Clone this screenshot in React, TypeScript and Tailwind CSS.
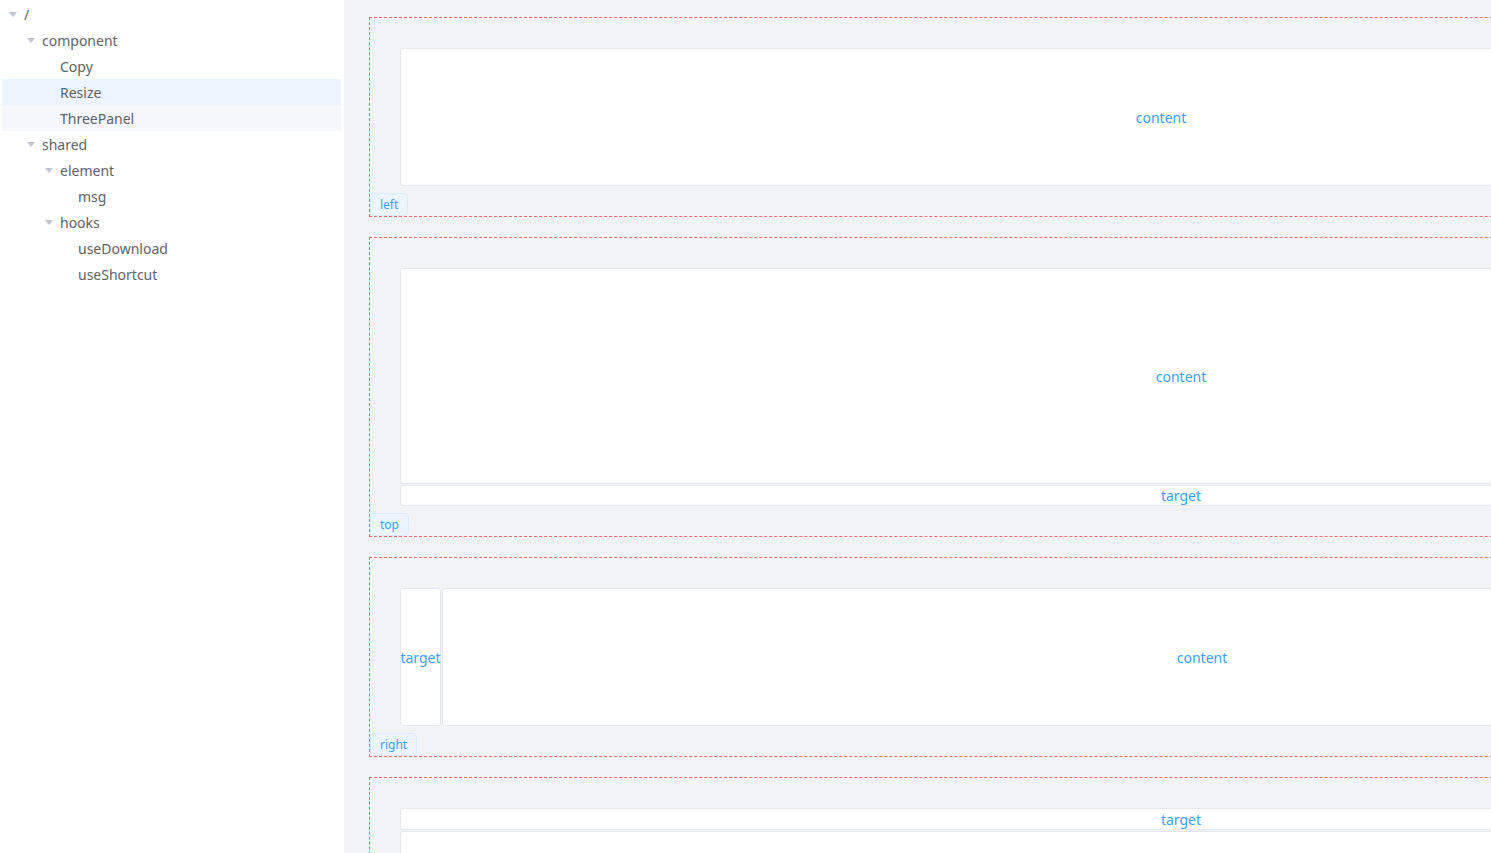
import React from "react";

type Node = { label: string; depth: number; caret: boolean; state?: "current" | "hover" };

const nodes: Node[] = [
  { label: "/", depth: 0, caret: true },
  { label: "component", depth: 1, caret: true },
  { label: "Copy", depth: 2, caret: false },
  { label: "Resize", depth: 2, caret: false, state: "current" },
  { label: "ThreePanel", depth: 2, caret: false, state: "hover" },
  { label: "shared", depth: 1, caret: true },
  { label: "element", depth: 2, caret: true },
  { label: "msg", depth: 3, caret: false },
  { label: "hooks", depth: 2, caret: true },
  { label: "useDownload", depth: 3, caret: false },
  { label: "useShortcut", depth: 3, caret: false },
];

function Caret({ show }: { show: boolean }) {
  return (
    <span className="w-[22px] h-full flex items-center justify-center shrink-0">
      {show && (
        <svg width="8" height="5" viewBox="0 0 8 5">
          <path d="M0 0 L8 0 L4 5 Z" fill="#c0c4cc" />
        </svg>
      )}
    </span>
  );
}

function Tree() {
  return (
    <div className="w-[344px] shrink-0 bg-white pt-[1px] pl-[2px] pr-[3px] h-full">
      {nodes.map((n) => (
        <div
          key={n.label}
          className={
            "h-[26px] flex items-center text-[14px] text-[#606266] " +
            (n.state === "current" ? "bg-[#ecf4fe]" : n.state === "hover" ? "bg-[#f5f7fa]" : "")
          }
          style={{ paddingLeft: n.depth * 18 }}
        >
          <Caret show={n.caret} />
          <span className="leading-none mt-[2px]">{n.label}</span>
        </div>
      ))}
    </div>
  );
}

function Box({ className, label }: { className: string; label?: string }) {
  return (
    <div
      className={
        "bg-white border border-[#e4e7ed] rounded-[3px] flex items-center justify-center text-[#409eff] text-[14px] " +
        className
      }
    >
      {label}
    </div>
  );
}

function Section({ tag, children }: { tag: string; children: React.ReactNode }) {
  return (
    <div className="relative w-[1624px] shrink-0 border border-dashed border-[#f56c6c] p-[30px] mb-5">
      {children}
      {tag && (
        <span className="absolute left-0 bottom-0 h-[23px] px-[9px] flex items-center bg-[#ecf5ff] border border-[#d9ecff] rounded-[4px] text-[12px] text-[#409eff]">
          {tag}
        </span>
      )}
    </div>
  );
}

export default function App() {
  return (
    <div
      className="flex w-[1491px] h-[853px] overflow-hidden"
      style={{ fontFamily: '"Noto Sans", "Open Sans", sans-serif' }}
    >
      <Tree />
      <div className="flex-1 bg-[#f2f3f5] pl-[25px] pt-[17px] overflow-hidden">
        <Section tag="left">
          <div className="flex gap-[1px] h-[138px]">
            <Box className="flex-1" label="content" />
            <Box className="w-[39px]" />
          </div>
        </Section>
        <Section tag="top">
          <div className="flex flex-col gap-[1px]">
            <Box className="h-[216px]" label="content" />
            <Box className="h-[21px]" label="target" />
          </div>
        </Section>
        <Section tag="right">
          <div className="flex gap-[1px] h-[138px]">
            <Box className="w-[41px]" label="target" />
            <Box className="flex-1" label="content" />
          </div>
        </Section>
        <Section tag="bottom">
          <div className="flex flex-col gap-[1px]">
            <Box className="h-[22px]" label="target" />
            <Box className="h-[216px]" label="content" />
          </div>
        </Section>
      </div>
    </div>
  );
}
